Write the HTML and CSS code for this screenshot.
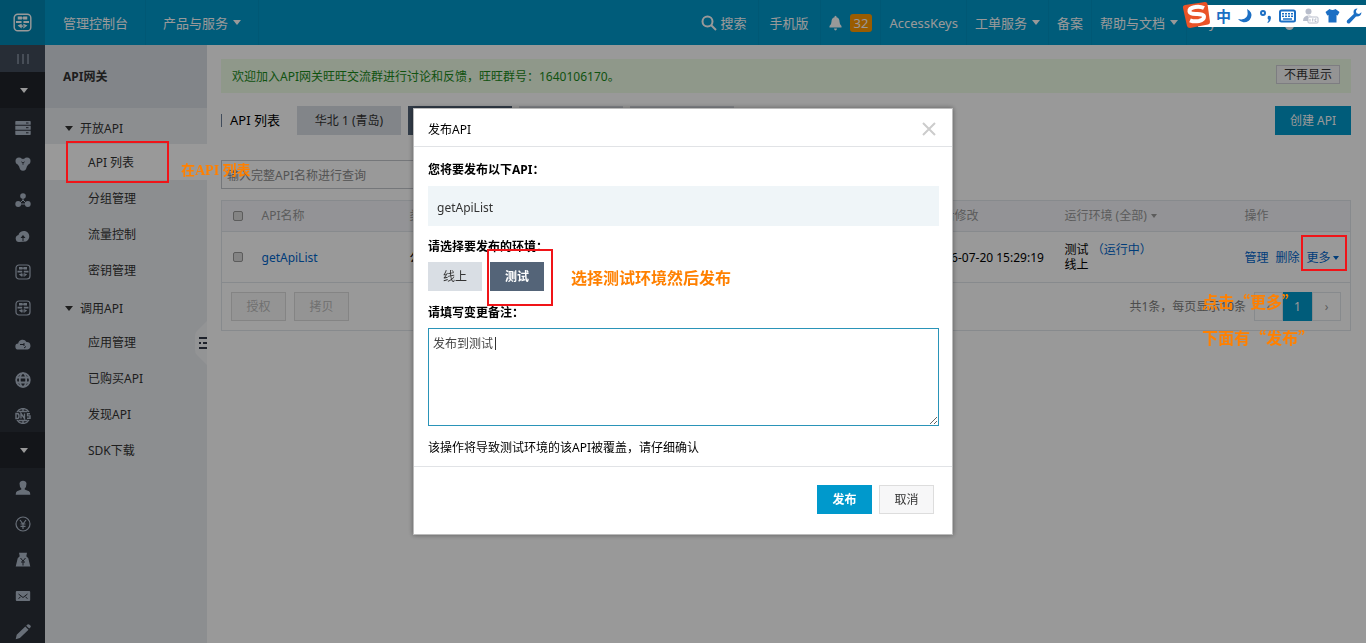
FILE: index.html
```
<!DOCTYPE html>
<html lang="zh-CN">
<head>
<meta charset="utf-8">
<title>API网关 - 管理控制台</title>
<link rel="stylesheet" href="styles.css">
</head>
<body>
<svg class="defs" aria-hidden="true">
  <symbol id="gateway" viewBox="0 0 16 16"><rect x="1" y="1" width="14" height="14" rx="3" fill="none" stroke="currentColor" stroke-width="1.2"/><path d="M4 3h3.500v2.500H4zM8.500 3H12v2.500H8.500zM2.500 6.800h4.700v1.700H2.500zM8.800 6.800h4.700v1.700H8.800zM6.600 3.800h3v.9h-3zM3.800 10.500L7.300 9v4zM12.200 10.500L8.700 9v4zM6.500 10.500h3v1h-3z" fill="currentColor"/></symbol>
  <symbol id="server" viewBox="0 0 16 16"><path fill="currentColor" d="M1 1h14a.7.7 0 0 1 .7.7v3H.3v-3A.7.7 0 0 1 1 1zM.3 5.7h15.400v4H.3zM.3 10.800h15.400v3.500a.7.7 0 0 1-.7.7H1a.7.7 0 0 1-.7-.7z"/><path d="M11 3h2.500M11 7.700h2.500M11 12.800h2.500" stroke="#2a2f38"/></symbol>
  <symbol id="cluster" viewBox="0 0 16 16"><g fill="currentColor"><circle cx="4" cy="5" r="3.500"/><circle cx="12" cy="5" r="3.500"/><circle cx="8" cy="11.300" r="3.400"/><path d="M2 7.500l3.500 5h5l3.500-5-6-5z"/></g><path d="M6.300 5.800l1.700 1 1.700-1M8 6.800v2" fill="none" stroke="#2a2f38" stroke-width=".8"/></symbol>
  <symbol id="nodes" viewBox="0 0 16 16"><path d="M8 4v4L4 12M8 8l4 4M4 12h8" stroke="currentColor" fill="none"/><g fill="currentColor"><circle cx="8" cy="4" r="2.800"/><circle cx="3.200" cy="12" r="2.900"/><circle cx="12.800" cy="12" r="2.900"/></g></symbol>
  <symbol id="cloudup" viewBox="0 0 16 16"><path fill="currentColor" d="M4 14a3.600 3.600 0 0 1-.5-7.100A5.500 5.500 0 1 1 11 13.500z"/><path d="M8 7l-2.500 3h2v3h1v-3h2z" fill="#2a2f38"/></symbol>
  <symbol id="cloudshare" viewBox="0 0 16 16"><path fill="currentColor" d="M3.500 13.500a3 3 0 0 1-.3-6A4.500 4.500 0 0 1 11.500 6a3.800 3.800 0 0 1 1 7.500z"/><path d="M5 8.500h4M9 7v3M11 10.500L9 12" stroke="#2a2f38" fill="none"/></symbol>
  <symbol id="globe" viewBox="0 0 16 16"><g fill="none" stroke="currentColor" stroke-width="1.800"><circle cx="8" cy="8" r="6.800"/><ellipse cx="8" cy="8" rx="3.200" ry="6.800"/><path d="M1.500 5.500h13M1.500 10.500h13"/></g></symbol>
  <symbol id="dns" viewBox="0 0 16 16"><g fill="none" stroke="currentColor" stroke-width="1.400"><path d="M2 4a7 7 0 0 1 12 0M2 12a7 7 0 0 0 12 0M8 1v3M8 12v3M3.500 3.500h9M3.500 12.500h9"/><path d="M1 5.500v5h1q2 0 2-2.500T2 5.500zM6 10.500v-5l3.500 5v-5M15 5.700h-2.500v2.200H15v2.400h-3"/></g></symbol>
  <symbol id="user" viewBox="0 0 16 16"><path fill="currentColor" d="M4.500 3.500Q5 .8 8 .8t3.500 2.700Q11.500 7 9.700 8.500v1l4.300 1.700q1.300.6 1.300 3.600H.7Q.7 11.800 2 11.200l4.300-1.700v-1Q4.500 7 4.500 3.500z"/></symbol>
  <symbol id="yen" viewBox="0 0 16 16"><g fill="none" stroke="currentColor" stroke-width="1.200"><circle cx="8" cy="8" r="7"/><path d="M5 4l3 4 3-4M8 8v5M5.500 8h5M5.500 10.300h5"/></g></symbol>
  <symbol id="bag" viewBox="0 0 16 16"><path fill="currentColor" d="M4 .8h8l-.7 3.400 2 2 2 8.300H.7l2-8.300 2-2z"/><path d="M5.500 6L8 9l2.500-3M8 9v4.500M6 10h4" fill="none" stroke="#2a2f38"/></symbol>
  <symbol id="mail" viewBox="0 0 16 16"><rect x=".8" y="3" width="14.400" height="10" rx="1" fill="currentColor"/><path d="M3.500 6L8 9.500 12.500 6M3.500 10.500l2-1.500M12.500 10.500l-2-1.500" fill="none" stroke="#2a2f38"/></symbol>
  <symbol id="pencil" viewBox="0 0 16 16"><path fill="currentColor" d="M.7 15.300l1-4.500 8.600-8.200 3.200 3.200-8.600 8.300zM11.200 1.800l1.300-1.300q1-.8 2 .2l.9.9q.9 1-.1 2l-1.100 1z"/></symbol>
</svg>

<header class="topbar">
  <a class="logo" href="#" aria-label="首页"><svg width="19" height="19"><use href="#gateway"/></svg></a>
  <a class="top-item top-home" href="#">管理控制台</a>
  <a class="top-item" href="#">产品与服务<i class="caret"></i></a>
  <nav class="top-right">
    <a class="top-item" href="#"><svg class="search-icon" width="16" height="16" viewBox="0 0 16 16"><g fill="none" stroke="currentColor" stroke-width="2"><circle cx="6.500" cy="6.500" r="5"/><path d="M10 10l5 5"/></g></svg>搜索</a>
    <a class="top-item" href="#">手机版</a>
    <a class="top-item" href="#" aria-label="消息"><svg width="13" height="16" viewBox="0 0 13 16"><path fill="currentColor" d="M5.500 1.500q1-1.500 2 0v.7q3 .8 3 4.300 0 3 2 4.500v1.500H.5V11q2-1.500 2-4.500 0-3.500 3-4.300zM5 13.500h3q-.3 2-1.500 2t-1.500-2z"/></svg><span class="badge">32</span></a>
    <a class="top-item" href="#">AccessKeys</a>
    <a class="top-item" href="#">工单服务<i class="caret"></i></a>
    <a class="top-item" href="#">备案</a>
    <a class="top-item" href="#">帮助与文档<i class="caret"></i></a>
    <span class="account">y<i class="dot"></i></span>
  </nav>
</header>

<div class="layout">
  <nav class="rail" aria-label="产品">
    <button class="rail-toggle" aria-label="展开"><svg width="12" height="10"><path d="M1 0v10M6 0v10M11 0v10" stroke="currentColor"/></svg></button>
    <button class="rail-fold" aria-label="产品与服务"><i class="caret"></i></button>
    <a href="#"><svg><use href="#server"/></svg></a>
    <a href="#"><svg><use href="#cluster"/></svg></a>
    <a href="#"><svg><use href="#nodes"/></svg></a>
    <a href="#"><svg><use href="#cloudup"/></svg></a>
    <a href="#"><svg><use href="#gateway"/></svg></a>
    <a href="#"><svg><use href="#gateway"/></svg></a>
    <a href="#"><svg><use href="#cloudshare"/></svg></a>
    <a href="#"><svg><use href="#globe"/></svg></a>
    <a href="#"><svg><use href="#dns"/></svg></a>
    <button class="rail-fold" aria-label="用户中心"><i class="caret"></i></button>
    <a href="#"><svg><use href="#user"/></svg></a>
    <a href="#"><svg><use href="#yen"/></svg></a>
    <a href="#"><svg><use href="#bag"/></svg></a>
    <a href="#"><svg><use href="#mail"/></svg></a>
    <a href="#"><svg><use href="#pencil"/></svg></a>
  </nav>

  <nav class="side">
    <h1>API网关</h1>
    <button class="group"><i class="caret"></i>开放API</button>
    <a class="active" href="#">API 列表</a>
    <a href="#">分组管理</a>
    <a href="#">流量控制</a>
    <a href="#">密钥管理</a>
    <button class="group"><i class="caret"></i>调用API</button>
    <a href="#">应用管理</a>
    <a href="#">已购买API</a>
    <a href="#">发现API</a>
    <a href="#">SDK下载</a>
    <svg class="handle" width="12" height="44" viewBox="0 0 12 44"><path d="M12 0v44L2 34Q0 32 0 29V15q0-3 2-5z" fill="#f6f7f9"/><path d="M4 17h8M4 22h2M8 22h4M4 27h8" stroke="#333a48" stroke-width="2"/></svg>
  </nav>

  <main class="main">
    <div class="notice"><span>欢迎加入API网关旺旺交流群进行讨论和反馈，旺旺群号：1640106170。</span><button>不再显示</button></div>
    <div class="heading">
      <h2>API 列表</h2>
      <div class="regions">
        <button>华北 1 (青岛)</button><button class="on" aria-label="华东 1 (杭州)"></button><button aria-label="华北 2 (北京)"></button><button aria-label="华南 1 (深圳)"></button>
      </div>
      <button class="primary">创建 API</button>
    </div>
    <input class="search" type="text" placeholder="输入完整API名称进行查询" aria-label="API名称">
    <table class="grid">
      <colgroup><col class="c-check"><col class="c-name"><col class="c-type"><col class="c-time"><col class="c-env"><col class="c-op"></colgroup>
      <thead><tr>
        <th><input type="checkbox" aria-label="全选"></th><th>API名称</th><th>类型</th><th>最后修改</th><th>运行环境 (全部)<i class="caret small"></i></th><th>操作</th>
      </tr></thead>
      <tbody><tr>
        <td><input type="checkbox" aria-label="getApiList"></td><td><a href="#">getApiList</a></td><td>公开</td><td>2016-07-20 15:29:19</td>
        <td>测试 <a href="#">（运行中）</a><br>线上</td>
        <td><div class="ops"><a href="#">管理</a><a href="#">删除</a><a href="#">更多<i class="caret small"></i></a></div></td>
      </tr></tbody>
    </table>
    <div class="grid-foot">
      <button disabled>授权</button><button disabled>拷贝</button>
      <span class="count">共1条，每页显示10条</span>
      <div class="pager"><button>‹</button><button class="on">1</button><button>›</button></div>
    </div>
  </main>
</div>

<div class="backdrop"></div>

<section class="modal" role="dialog" aria-labelledby="dlg-title">
  <header><h3 id="dlg-title">发布API</h3><button class="close" aria-label="关闭"><svg width="14" height="14"><path d="M1 1l12 12M13 1L1 13" stroke="currentColor" stroke-width="2"/></svg></button></header>
  <div class="modal-body">
    <strong>您将要发布以下API：</strong>
    <div class="api-name">getApiList</div>
    <strong>请选择要发布的环境：</strong>
    <div class="envs"><button>线上</button><button class="on">测试</button></div>
    <label for="note">请填写变更备注：</label>
    <div class="note-wrap"><textarea id="note">发布到测试</textarea><i class="cursor"></i></div>
    <p>该操作将导致测试环境的该API被覆盖，请仔细确认</p>
  </div>
  <footer><button class="primary">发布</button><button class="cancel">取消</button></footer>
  <div class="mark mark-env"></div>
  <div class="tip tip-env">选择测试环境然后发布</div>
</section>

<div class="mark mark-list"></div>
<div class="tip tip-list">在API 列表</div>
<div class="mark mark-more"></div>
<div class="tip tip-more">点击“更多”<br>下面有“发布”</div>

<div class="ime">
  <svg class="ime-logo" width="30" height="28" viewBox="0 0 30 28"><path d="M3 4L23 1q2 0 2.500 2L28 21q0 2-2 2.500L8 27q-2.500 0-3-2L1 7q-.5-2.500 2-3z" fill="#ea5327"/><path d="M22 7q-4-2-9-1-6 1-5.500 4.500Q8 13 14 13q8-.3 8 2.800 0 3-5 4.200-5 1-9-.7" fill="none" stroke="#fff" stroke-width="4"/></svg>
  <span>中</span>
  <svg width="16" height="16" viewBox="0 0 16 16"><path d="M10 1q6 3 4 8.500-2 5-7.500 4.700Q3 14 1 11q6 1.500 8.500-2Q11.500 6 10 1z"/></svg>
  <svg width="14" height="16" viewBox="0 0 14 16"><circle cx="4" cy="5" r="2" class="line"/><path d="M9 8q3-1 3 2 0 3-3 5l-.7-.8Q10 13 9.500 11.500 8 11 9 8z"/></svg>
  <svg width="17" height="16" viewBox="0 0 17 16"><rect x="1" y="2.500" width="15" height="11" rx="1.500" class="line"/><path d="M3 5h2v1.500H3zM6 5h2v1.500H6zM9 5h2v1.500H9zM12 5h2v1.500h-2zM3 7.500h2V9H3zM6 7.500h2V9H6zM9 7.500h2V9H9zM12 7.500h2V9h-2zM4 10.200h9v1.500H4z"/></svg>
  <svg class="muted" width="17" height="16" viewBox="0 0 17 16"><circle cx="6.500" cy="3.500" r="3"/><path d="M1 13q0-5.500 6-5.500 2 0 3 .8H6V13z"/><rect x="6" y="9" width="10" height="6" rx="1" fill="#fff" stroke="#b8bdcb"/><path d="M8 11v2.500M10 11h1.500M10.700 11v2.500M14.500 11H13v2.500h1.500" fill="none" stroke="#b8bdcb"/></svg>
  <svg width="15" height="16" viewBox="0 0 15 16"><path d="M4.500 1q3 2 6 0l4 3-1.800 3.500L11.500 7v7.500h-8V7l-1.200.5L.5 4z"/></svg>
  <svg width="16" height="16" viewBox="0 0 16 16"><path d="M11.500.5q-4 .3-4 3.500l.3 2L1 12.500q-.8 1.500.3 2.500t2.400.2L10 8.500q5 .5 5.500-4.300L13 6l-2.500-.8-.6-2.200z"/></svg>
</div>
</body>
</html>
```

FILE: styles.css
```
* { box-sizing: border-box; }
html, body { height: 100%; }
body {
  margin: 0;
  display: flex;
  flex-direction: column;
  overflow: hidden;
  background: #fff;
  color: #000;
  font: 12px/18px "Noto Sans", "Noto Sans CJK SC", sans-serif;
}
button, input, textarea { font: inherit; color: inherit; margin: 0; }
button { border: 0; padding: 0; background: none; white-space: nowrap; }
a { color: #06c; text-decoration: none; }
h1, h2, h3, p { margin: 0; font-size: 12px; font-weight: 400; }
.defs { display: none; }
.caret {
  display: inline-block;
  border: 4px solid transparent;
  border-top: 5px solid currentColor;
  border-bottom: 0;
  flex: none;
}
.caret.small { border-width: 4px 3px 0; margin-left: 4px; vertical-align: 2px; }

/* Top bar */
.topbar { display: flex; flex: none; height: 45px; background: #09c; color: #fff; font-size: 13px; }
.logo { width: 45px; display: flex; align-items: center; justify-content: center; background: #0087b4; color: #fff; }
.top-item {
  display: flex;
  align-items: center;
  padding: 0 8px;
  color: #fff;
  border-right: 1px solid #0093c4;
  white-space: nowrap;
}
.topbar > .top-item { padding: 0 17px; }
.topbar > .top-home { padding-left: 18px; }
.top-item .caret { margin-left: 5px; }
.top-right { display: flex; margin-left: auto; }
.top-right .top-item:nth-child(-n+2) { padding: 0 11px; }
.search-icon { margin-right: 3px; }
.badge { margin-left: 8px; padding: 0 4px; border-radius: 3px; background: #f90; }
.account { display: flex; align-items: center; gap: 69px; width: 179px; padding-left: 22px; }
.dot { width: 9px; height: 9px; margin-top: 6px; border-radius: 50%; background: #fff; }

.layout { display: flex; flex: 1; min-height: 0; }

/* Icon rail */
.rail { width: 45px; flex: none; background: #2a2f38; color: #aeb9c9; overflow: hidden; }
.rail > * { display: flex; align-items: center; justify-content: center; width: 100%; height: 36px; color: inherit; }
.rail > a { padding-top: 3px; }
.rail a svg { width: 16px; height: 16px; }
.rail .rail-toggle { height: 27px; background: #414b5b; }
.rail .rail-fold { background: #20242b; color: #fff; padding-left: 3px; }

/* Product menu */
.side { position: relative; width: 162px; flex: none; background: #eaedf1; color: #333; }
.side h1 { height: 63px; padding-left: 18px; line-height: 63px; font-weight: 700; background: #d9dee4; }
.side a { display: block; height: 36px; padding-left: 43px; line-height: 38px; color: #333; }
.side a.active { background: #fff; }
.side .group { display: flex; align-items: center; gap: 7px; width: 100%; height: 36px; padding: 5px 0 0 20px; }
.handle { position: absolute; right: 0; top: 276px; }

/* Content */
.main { flex: 1; min-width: 0; padding: 14px 15px 0 14px; }
.notice {
  display: flex;
  align-items: center;
  justify-content: space-between;
  height: 34px;
  padding: 2px 11px 0;
  background: #eefde6;
  color: #1a8a1a;
}
.notice button { height: 19px; padding: 0 7px; border: 1px solid #d0d0d8; background: #f7f7f7; color: #333; line-height: 17px; margin-bottom: 6px; }
.heading { display: flex; align-items: center; height: 29px; margin-top: 13px; }
.heading h2 { width: 76px; padding-left: 8px; border-left: 1px solid #6d7f99; font-size: 13px; line-height: 13px; white-space: nowrap; }
.regions { display: flex; gap: 7px; }
.regions button { width: 104px; height: 29px; background: #d9dee4; color: #333; }
.regions .on { background: #546478; color: #fff; }
.primary { height: 29px; padding: 0 15px; background: #09c; color: #fff; }
.heading .primary { margin-left: auto; }
.search { display: block; width: 300px; height: 29px; margin-top: 25px; padding: 1px 5px 0; border: 1px solid #c3c6cc; background: #fff; }
.search::placeholder { color: #8c8c8c; opacity: 1; }
.grid { width: 100%; margin-top: 11px; border-collapse: collapse; table-layout: fixed; border: 1px solid #e1e6eb; }
.grid th, .grid td { padding: 0 3px; text-align: left; font-weight: 400; }
.grid th { height: 31px; background: #f5f6fa; color: #999; }
.grid td { height: 51px; border: solid #e1e6eb; border-width: 1px 0; line-height: 15px; white-space: nowrap; }
.grid input { appearance: none; display: block; width: 10px; height: 10px; margin-left: 8px; border: 1px solid #999; border-radius: 2px; background: #ddd; }
.c-check { width: 37px; }
.c-name { width: 148px; }
.c-time { width: 134px; }
.c-env { width: 180px; }
.c-op { width: 109px; }
.ops { display: flex; gap: 7px; }
.ops .caret { margin-left: 2px; }
.grid-foot { display: flex; align-items: center; gap: 8px; height: 48px; padding: 0 9px; border: 1px solid #e1e6eb; border-top: 0; }
.grid-foot > button { width: 55px; height: 29px; border: 1px solid #ddd; background: #f7f7f7; color: #bbb; }
.count { margin-left: auto; color: #808080; }
.pager { display: flex; }
.pager button { width: 29px; height: 29px; border: 1px solid #e1e6eb; color: #999; }
.pager .on { background: #09c; border-color: #09c; color: #fff; }

/* Dialog */
.backdrop { position: fixed; inset: 0; background: rgba(0, 0, 0, .4); }
.modal {
  position: fixed;
  top: 108px;
  left: 50%;
  width: 540px;
  transform: translateX(-50%);
  border: 1px solid #bbb;
  background: #fff;
  box-shadow: 0 0 5px rgba(0, 0, 0, .4);
}
.modal header { display: flex; align-items: center; justify-content: space-between; height: 38px; padding: 4px 16px 0 14px; border-bottom: 1px solid #e1e3e6; }
.close { display: flex; margin-bottom: 2px; color: #ccc; }
.modal-body { padding: 14px 13px 9px 14px; }
.modal strong, .modal label { display: block; font-weight: 700; }
.api-name { height: 40px; margin: 7px 0 12px; padding: 2px 9px 0; line-height: 40px; background: #eff5f8; color: #333; }
.envs { display: flex; gap: 8px; margin: 6px 0 13px; }
.envs button { width: 54px; height: 29px; background: #d9dee4; color: #333; }
.envs .on { background: #546478; color: #fff; font-weight: 700; }
.note-wrap { position: relative; margin: 6px 0 13px; }
.modal textarea { display: block; width: 100%; height: 98px; padding: 6px 4px; border: 1px solid #2a94b8; outline: 0; color: #444; }
.cursor { position: absolute; left: 67px; top: 9px; width: 1px; height: 13px; background: #333; }
.modal footer { display: flex; justify-content: flex-end; gap: 7px; padding: 18px 18px 20px; border-top: 1px solid #e1e3e6; }
.modal footer button { width: 55px; height: 29px; }
.modal footer .primary { font-weight: 700; }
.cancel { border: 1px solid #ddd; background: #f7f7f8; color: #333; }

/* Annotations */
.mark { position: fixed; border: 2px solid #f01418; }
.tip { position: fixed; color: #ff8000; font-family: "Liberation Serif", "Noto Sans CJK SC", serif; font-size: 16px; line-height: 36px; font-weight: 700; white-space: nowrap; }
.mark-list { left: 66px; top: 141px; width: 103px; height: 42px; }
.tip-list { left: 181px; top: 153px; font-size: 14px; }
.mark-more { right: 19px; top: 235px; width: 46px; height: 36px; }
.tip-more { right: 52px; top: 283px; font-family: "Noto Sans CJK SC", sans-serif; }
.mark-env { position: absolute; left: 73px; top: 140px; width: 66px; height: 57px; }
.tip-env { position: absolute; left: 157px; top: 152px; }

/* Input method bar */
.ime {
  position: fixed;
  top: 5px;
  right: 0;
  display: flex;
  align-items: center;
  gap: 6px;
  height: 22px;
  padding: 0 4px 0 34px;
  background: linear-gradient(#fff, #fff) no-repeat 16px 0;
  color: #1c6fc4;
  fill: currentColor;
  font-size: 15px;
  font-weight: 700;
}
.ime .line { fill: none; stroke: currentColor; stroke-width: 2; }
.ime .muted { fill: #b8bdcb; }
.ime-logo { position: absolute; left: 0; top: -4px; }
```
